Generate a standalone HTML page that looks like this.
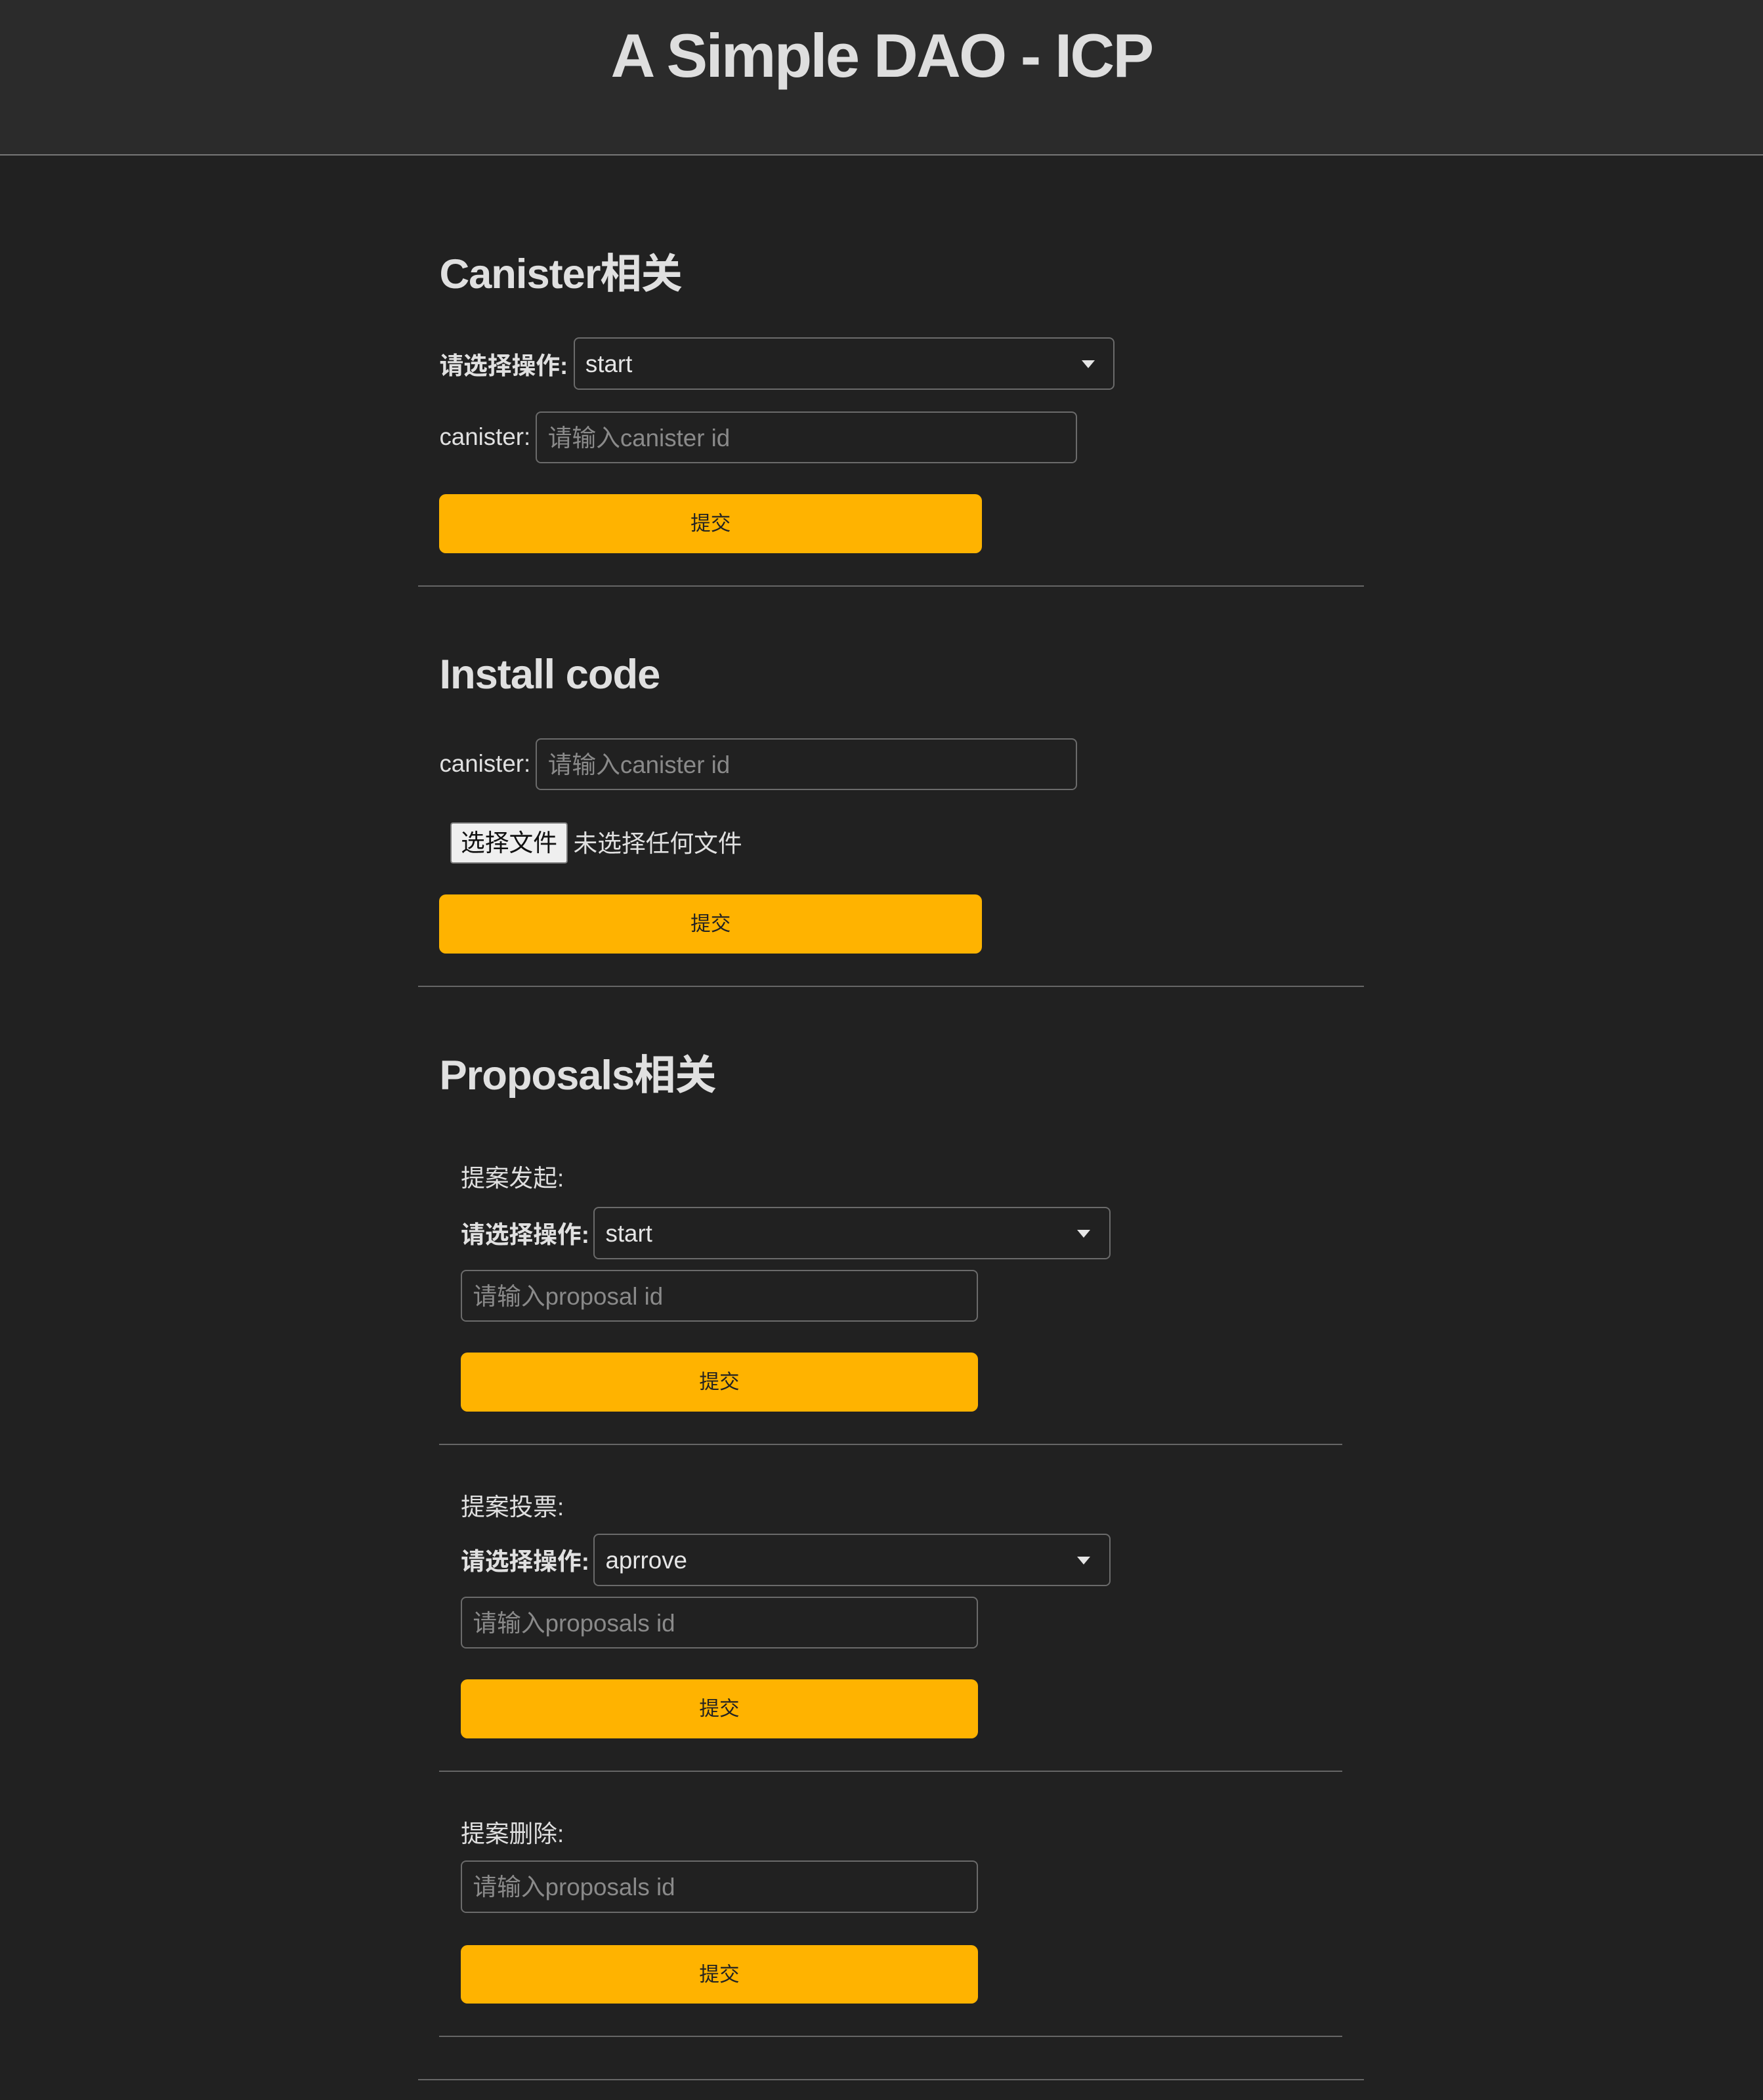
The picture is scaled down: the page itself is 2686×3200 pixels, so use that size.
<!DOCTYPE html>
<html><head><meta charset="utf-8"><style>
html,body{margin:0;padding:0;background:#212121;}
body{width:2686px;height:3200px;overflow:hidden;}
#w{zoom:2.0410;position:relative;width:1316px;height:1568px;font-family:"Liberation Sans","Noto Sans CJK SC",sans-serif;color:#e0e0e0;}
.a{position:absolute;white-space:nowrap;}
.hdr{left:0;top:0;width:1316px;height:115px;background:#2b2b2b;border-bottom:1px solid #777;}
.t{left:0;width:1316px;top:15px;text-align:center;font-size:46px;font-weight:bold;color:#dedede;letter-spacing:-1.3px;}
h2{margin:0;position:absolute;font-size:31px;font-weight:bold;color:#e0e0e0;white-space:nowrap;letter-spacing:-0.5px;}
.lb{font-size:18px;}
.b{font-weight:bold;}
.box{position:absolute;box-sizing:border-box;border:1px solid #6b6b6b;border-radius:4px;background:#212121;font-size:18px;line-height:38px;padding-left:8px;color:#e6e6e6;}
.ph{color:#8a8a8a;}
.arr{position:absolute;right:14px;top:16px;width:0;height:0;border-left:5px solid transparent;border-right:5px solid transparent;border-top:6px solid #e6e6e6;}
.btn{position:absolute;background:#ffb300;border-radius:5px;height:44px;text-align:center;line-height:45px;font-size:15px;color:#222;}
.hr{position:absolute;height:1px;background:#666;}
.file{position:absolute;box-sizing:border-box;background:#efefef;border:1px solid #777;border-radius:2px;color:#111;font-size:18px;line-height:29px;text-align:center;}
</style></head><body><div id="w">
<div class="a hdr"></div>
<div class="a t">A Simple DAO - ICP</div>

<h2 style="left:328px;top:180px">Canister相关</h2>
<div class="a lb b" style="left:328px;top:258px">请选择操作:</div>
<div class="box" style="left:428px;top:252px;width:404px;height:39px">start<div class="arr"></div></div>
<div class="a lb" style="left:328px;top:316px">canister:</div>
<div class="box ph" style="left:400px;top:307px;width:404px;height:39px">请输入canister id</div>
<div class="btn" style="left:328px;top:369px;width:405px">提交</div>
<div class="hr" style="left:312px;top:437px;width:706px"></div>

<h2 style="left:328px;top:486px">Install code</h2>
<div class="a lb" style="left:328px;top:560px">canister:</div>
<div class="box ph" style="left:400px;top:551px;width:404px;height:39px">请输入canister id</div>
<div class="file" style="left:336px;top:614px;width:88px;height:31px">选择文件</div>
<div class="a lb" style="left:428px;top:615px">未选择任何文件</div>
<div class="btn" style="left:328px;top:668px;width:405px">提交</div>
<div class="hr" style="left:312px;top:736px;width:706px"></div>

<h2 style="left:328px;top:778px">Proposals相关</h2>
<div class="a lb" style="left:344px;top:865px">提案发起:</div>
<div class="a lb b" style="left:344px;top:907px">请选择操作:</div>
<div class="box" style="left:443px;top:901px;width:386px;height:39px">start<div class="arr"></div></div>
<div class="box ph" style="left:344px;top:948px;width:386px;height:39px">请输入proposal id</div>
<div class="btn" style="left:344px;top:1010px;width:386px">提交</div>
<div class="hr" style="left:328px;top:1078px;width:674px"></div>

<div class="a lb" style="left:344px;top:1110px">提案投票:</div>
<div class="a lb b" style="left:344px;top:1151px">请选择操作:</div>
<div class="box" style="left:443px;top:1145px;width:386px;height:39px">aprrove<div class="arr"></div></div>
<div class="box ph" style="left:344px;top:1192px;width:386px;height:39px">请输入proposals id</div>
<div class="btn" style="left:344px;top:1254px;width:386px">提交</div>
<div class="hr" style="left:328px;top:1322px;width:674px"></div>

<div class="a lb" style="left:344px;top:1354px">提案删除:</div>
<div class="box ph" style="left:344px;top:1389px;width:386px;height:39px">请输入proposals id</div>
<div class="btn" style="left:344px;top:1452px;width:386px">提交</div>
<div class="hr" style="left:328px;top:1520px;width:674px"></div>
<div class="hr" style="left:312px;top:1552px;width:706px"></div>
</div></body></html>
